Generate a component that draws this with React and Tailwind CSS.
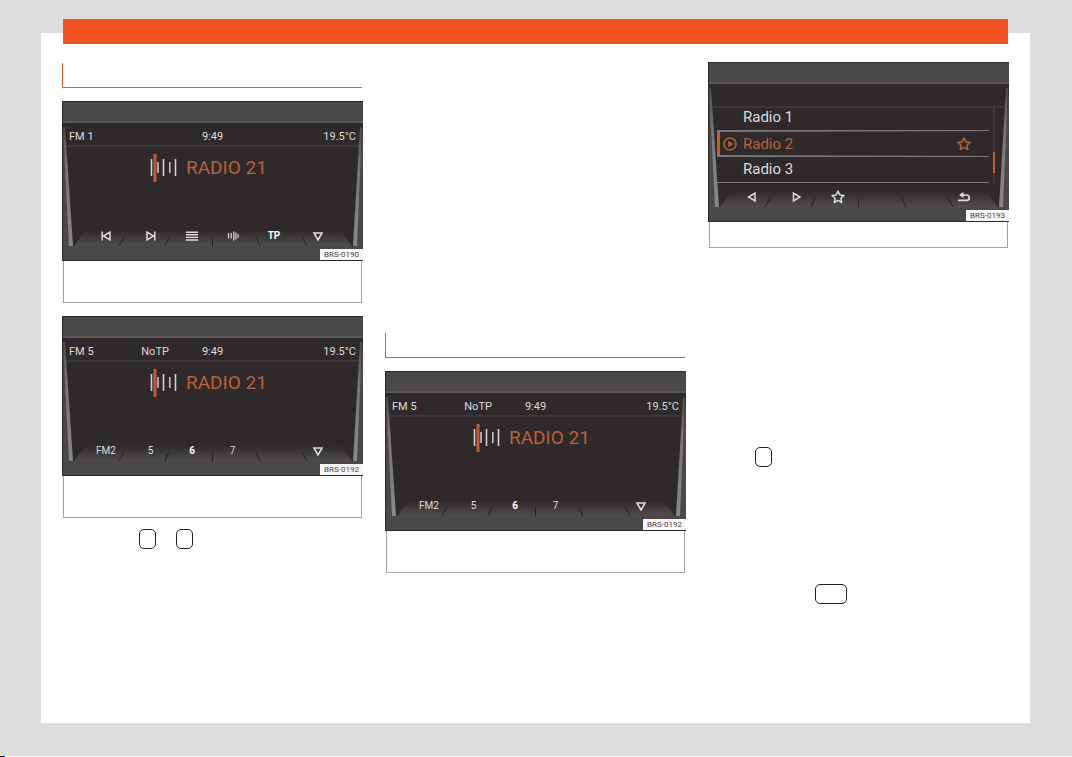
import { clsx } from 'clsx';

const TriangleDown = () => (
  <svg width="12" height="12" viewBox="0 0 12 12" fill="none" stroke="currentColor" strokeWidth="1.6">
    <path d="M2 3h8L6 10z" />
  </svg>
);

const TriangleLeft = () => (
  <svg width="12" height="12" viewBox="0 0 12 12" fill="none" stroke="currentColor" strokeWidth="1.5">
    <path d="M9 2v8L2.5 6z" />
  </svg>
);

const TriangleRight = () => (
  <svg width="12" height="12" viewBox="0 0 12 12" fill="none" stroke="currentColor" strokeWidth="1.5">
    <path d="M2.500 2v8L9 6z" />
  </svg>
);

const PrevIcon = () => (
  <svg width="12" height="12" viewBox="0 0 12 12" fill="none" stroke="currentColor" strokeWidth="1.5">
    <path d="M2.200 1.400v9.200M10 2v8L3.400 6z" />
  </svg>
);

const NextIcon = () => (
  <svg width="12" height="12" viewBox="0 0 12 12" fill="none" stroke="currentColor" strokeWidth="1.5">
    <path d="M9.800 1.400v9.200M2 2v8l6.600-4z" />
  </svg>
);

const ListIcon = () => (
  <svg width="14" height="12" viewBox="0 0 14 12" stroke="currentColor" strokeWidth="1.4">
    <path d="M1 2.200h12M1 4.800h12M1 7.400h12M1 10h12" />
  </svg>
);

const TunerIcon = () => (
  <svg width="12" height="12" viewBox="0 0 12 12" stroke="currentColor" strokeWidth="1.2">
    <path d="M1.500 3v5.500M4.200 3v5.500M6.800 1.500v9M8.900 2.500v7M11 4v4" />
  </svg>
);

const StarIcon = () => (
  <svg width="14" height="14" viewBox="0 0 14 14" fill="none" stroke="currentColor" strokeWidth="1.5" strokeLinejoin="round">
    <path d="M7 1l1.800 3.900 4.200.500-3.100 2.900.8 4.200L7 10.400l-3.700 2.100.8-4.200L1 5.400l4.200-.5z" />
  </svg>
);

const BackIcon = () => (
  <svg width="14" height="12" viewBox="0 0 14 12" fill="none" stroke="currentColor" strokeWidth="1.7">
    <path d="M5 4h4.500a2.700 2.700 0 0 1 0 5.400H1" />
    <path d="M2 4l4.500-3v6z" fill="currentColor" stroke="none" />
  </svg>
);

const PlayIcon = () => (
  <svg width="14" height="14" viewBox="0 0 14 14" fill="none" stroke="currentColor" strokeWidth="1.5">
    <circle cx="7" cy="7" r="6" />
    <path d="M5.300 3.800v6.400L10 7z" fill="currentColor" stroke="none" />
  </svg>
);

const SignalIcon = () => (
  <svg width="28" height="30" viewBox="0 0 28 30">
    <path d="M1.500 6v17M13.500 6v17M25.500 6v17" stroke="#d2d0d0" strokeWidth="1.6" />
    <path d="M8 9v11M19.800 9v11" stroke="#c4c2c2" strokeWidth="1.6" />
    <path d="M5 1v28" stroke="#c25a32" strokeWidth="3" />
  </svg>
);

// Housing of the display: bevels, status line and the slanted soft key edges
const Housing = ({ id }) => (
  <svg className="absolute inset-0 h-full w-full" viewBox="0 0 301 160" preserveAspectRatio="none" aria-hidden="true">
    <defs>
      <linearGradient id={`${id}-edge`} x1="0" y1="0" x2="0" y2="1">
        <stop offset="0" stopColor="#4d4a4b" />
        <stop offset="0.3" stopColor="#747273" />
        <stop offset="1" stopColor="#8a8889" />
      </linearGradient>
      <linearGradient id={`${id}-keys`} x1="0" y1="0" x2="0" y2="1">
        <stop offset="0" stopColor="#2e2a2b" />
        <stop offset="1" stopColor="#4f4c4d" />
      </linearGradient>
    </defs>
    <rect width="301" height="160" fill="#2b2829" />
    <rect x="1" y="1" width="300" height="158" fill="#4b4849" />
    <rect x="1" y="20" width="300" height="2" fill="#5a5758" />
    <path d="M1 22H301V26L292 145H9L1 26z" fill="#2e2a2b" />
    <path d="M3 44h295v2H3z" fill="#3b3839" />
    <path d="M1 26h2L11 145H7z" fill={`url(#${id}-edge)`} />
    <path d="M300 26h-2L291 145h4z" fill={`url(#${id}-edge)`} />
    <path d="M24 129H278L290 145H12z" fill={`url(#${id}-keys)`} />
    <path d="M62 136L57 145M107 136L103 145M150.500 136V145M194 136L198 145M240 136L245 145" stroke="#242122" strokeWidth="1" fill="none" />
  </svg>
);

const SoftKeys = ({ keys }) => (
  <div className="grid h-6 grid-cols-[46fr_43fr_40fr_41fr_42fr_45fr] pt-1 pr-[23px] pl-[21px]">
    {keys.map((key, index) => (
      <button
        key={index}
        type="button"
        aria-label={key.label}
        className={clsx(
          'flex h-5 items-center justify-center text-[10px] leading-5',
          key.bold ? 'font-bold text-white' : 'text-[#dddbdb]'
        )}
      >
        {key.content}
      </button>
    ))}
  </div>
);

const Screen = ({ id, code, keys, children }) => (
  <div className="relative flex h-40 flex-col pt-[22px] text-[#dddbdb]">
    <Housing id={id} />
    <div className="relative flex flex-col">
      {children}
      <SoftKeys keys={keys} />
    </div>
    <span className="absolute right-0 bottom-px h-[11px] w-[43px] bg-[#f7f6f6] text-center text-[8px] leading-[11px] text-[#4a4748]">
      {code}
    </span>
  </div>
);

const StationScreen = ({ id, code, band, traffic, keys }) => (
  <Screen id={id} code={code} keys={keys}>
    <div className="grid h-6 grid-cols-[1fr_auto_1fr] px-[7px] pt-1 text-[11px] leading-5">
      <div className="flex justify-between pr-[33px]">
        <span>{band}</span>
        {traffic && <span>{traffic}</span>}
      </div>
      <span>9:49</span>
      <span className="text-right">19.5°C</span>
    </div>
    <div className="flex h-[75px] items-start gap-2 pt-[6px] pl-[88px]">
      <SignalIcon />
      <span className="text-[19px] leading-[30px] text-[#b9603c]">RADIO 21</span>
    </div>
  </Screen>
);

const stations = ['Radio 1', 'Radio 2', 'Radio 3'];

const ListScreen = ({ id, code, keys, current }) => (
  <Screen id={id} code={code} keys={keys}>
    <div className="mt-[21px] flex pr-[14px] pl-[9px]">
      <ul className="flex-1">
        {stations.map((station) => (
          <li key={station} className="flex h-[26px] flex-col border-b border-[#7a7879]">
            {station === current ? (
              <div className="flex flex-1 flex-col border-l-3 border-[#c25a32] text-[#b9603c]">
                <div className="h-px bg-linear-to-r from-[#c25a32] to-[#2e2a2b]" />
                <div className="flex flex-1 items-center pr-[18px] pl-[3px]">
                  <PlayIcon />
                  <span className="flex-1 pl-[6px] text-[15px] leading-5">{station}</span>
                  <StarIcon />
                </div>
                <div className="h-px bg-linear-to-r from-[#c25a32] to-[#2e2a2b]" />
              </div>
            ) : (
              <span className="pl-[26px] text-[15px] leading-6">{station}</span>
            )}
          </li>
        ))}
      </ul>
      <div className="ml-1 flex w-[2px] flex-col bg-[#3d3a3b] pt-[47px]">
        <div className="h-[21px] bg-[#c25a32]" />
      </div>
    </div>
  </Screen>
);

const Figure = ({ children, tall }) => (
  <figure>
    {children}
    <figcaption className={clsx('mx-px border border-t-0 border-[#a3a3a3]', tall ? 'h-[42px]' : 'h-[26px]')} />
  </figure>
);

const SectionRule = () => <div className="mr-px h-[25px] border-b border-l border-[#f4541d]" />;

const Key = ({ wide }) => (
  <kbd className={clsx('block h-5 rounded-[5px] border border-[#231f20]', wide ? 'w-8' : 'w-[17px]')} />
);

const playerKeys = [
  { label: 'Previous', content: <PrevIcon /> },
  { label: 'Next', content: <NextIcon /> },
  { label: 'List', content: <ListIcon /> },
  { label: 'Tuner', content: <TunerIcon /> },
  { label: 'TP', content: 'TP', bold: true },
  { label: 'More', content: <TriangleDown /> },
];

const presetKeys = [
  { label: 'FM2', content: 'FM2' },
  { label: '5', content: '5' },
  { label: '6', content: '6', bold: true },
  { label: '7', content: '7' },
  { label: 'Empty' },
  { label: 'More', content: <TriangleDown /> },
];

const listKeys = [
  { label: 'Back', content: <TriangleLeft /> },
  { label: 'Forward', content: <TriangleRight /> },
  { label: 'Favourite', content: <StarIcon /> },
  { label: 'Empty' },
  { label: 'Empty' },
  { label: 'Return', content: <BackIcon /> },
];

export default function App() {
  return (
    <div className="flex min-h-screen flex-col font-['Roboto',sans-serif]">
      <div className="flex flex-1 flex-col bg-[#dddddd] pt-[33px] pr-[42px] pb-[33px] pl-[41px]">
        <main className="flex-1 bg-white px-[21px]">
          <header className="mx-px -mt-[14px] h-[25px] bg-[#f4541d]" />
          <div className="mt-[18px] grid grid-cols-3 items-start gap-[22px]">
            <section className="pt-px">
              <SectionRule />
              <div className="mt-[13px] flex flex-col gap-[13px]">
                <Figure tall>
                  <StationScreen id="fm1" code="BRS-0190" band="FM 1" keys={playerKeys} />
                </Figure>
                <Figure tall>
                  <StationScreen id="fm5" code="BRS-0192" band="FM 5" traffic="NoTP" keys={presetKeys} />
                </Figure>
              </div>
              <div className="mt-[11px] flex gap-5 pl-[77px]">
                <Key />
                <Key />
              </div>
            </section>

            <section className="pt-[271px]">
              <SectionRule />
              <div className="mt-[13px]">
                <Figure tall>
                  <StationScreen id="presets" code="BRS-0192" band="FM 5" traffic="NoTP" keys={presetKeys} />
                </Figure>
              </div>
            </section>

            <section>
              <Figure>
                <ListScreen id="list" code="BRS-0193" keys={listKeys} current="Radio 2" />
              </Figure>
              <div className="mt-[199px] pl-[47px]">
                <Key />
              </div>
              <div className="mt-[117px] pl-[107px]">
                <Key wide />
              </div>
            </section>
          </div>
        </main>
      </div>
      <footer className="flex h-px bg-white">
        <div className="w-1 bg-black" />
        <div className="w-px bg-blue-700" />
      </footer>
    </div>
  );
}
